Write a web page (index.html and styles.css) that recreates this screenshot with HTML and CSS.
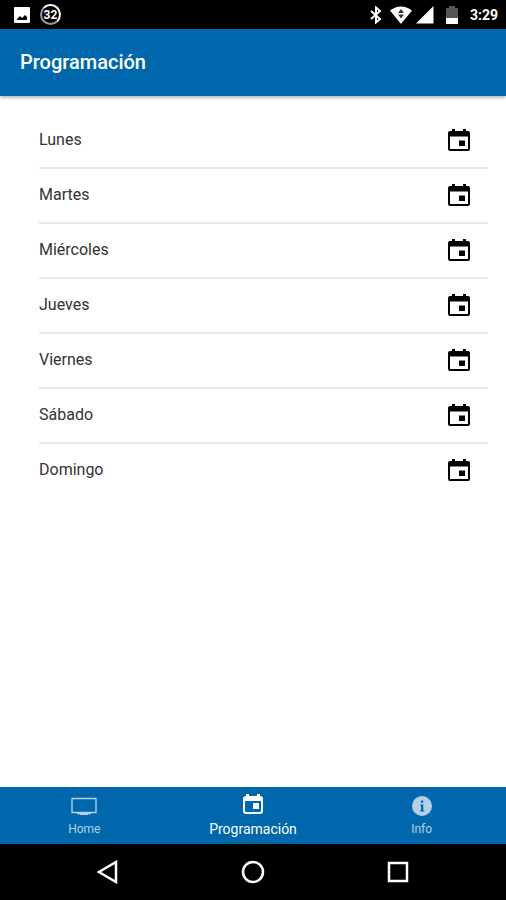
FILE: index.html
```html
<!DOCTYPE html>
<html lang="es">
<head>
  <meta charset="UTF-8">
  <meta name="viewport" content="width=device-width, initial-scale=1.0">
  <title>Programación</title>
  <link rel="stylesheet" href="styles.css">
</head>
<body>
  <svg class="sprite" aria-hidden="true">
    <symbol id="calendar" viewBox="0 0 22 22">
      <path fill-rule="evenodd" d="M4 0h3v2h8V0h3v2h2a2 2 0 0 1 2 2v16a2 2 0 0 1-2 2H2a2 2 0 0 1-2-2V4a2 2 0 0 1 2-2h2zM2 7.500V20h18V7.500z"/>
      <path d="M11 11.500h6V17h-6z"/>
    </symbol>
  </svg>

  <div class="status-bar">
    <div class="status-group">
      <svg width="16" height="16" viewBox="0 0 16 16">
        <path fill="#fff" fill-rule="evenodd" d="M1 0h14a1 1 0 0 1 1 1v14a1 1 0 0 1-1 1H1a1 1 0 0 1-1-1V1a1 1 0 0 1 1-1zM3 13h10v-3l-2-2-3 3-2-2-3 3z"/>
      </svg>
      <span class="counter">32</span>
    </div>
    <div class="status-group status-right">
      <svg width="12" height="18" viewBox="0 0 12 18">
        <path fill="none" stroke="#fff" stroke-width="2" d="M1 5l9 8-4 3.500v-15L10 5l-9 8"/>
      </svg>
      <svg class="wifi" width="22" height="18" viewBox="0 0 22 18">
        <path fill="#fff" d="M0 4.500Q11-3.500 22 4.500L11 18z"/>
        <path fill="#333" d="M11 3l3 4H8zM8 8.500h6l-3 4z"/>
      </svg>
      <svg width="18" height="18" viewBox="0 0 18 18">
        <path fill="#fff" d="M17.500 0v17.500H0z"/>
      </svg>
      <svg class="battery" width="12" height="18" viewBox="0 0 12 18">
        <path fill="#555" d="M0 2h3V0h6v2h3v10H0z"/>
        <path fill="#fff" d="M0 12h12v6H0z"/>
      </svg>
      <span class="clock">3:29</span>
    </div>
  </div>

  <header class="toolbar">
    <h1>Programación</h1>
  </header>

  <main class="content">
    <ul class="day-list">
      <li><a href="#lunes">Lunes <svg class="day-icon"><use href="#calendar"/></svg></a></li>
      <li><a href="#martes">Martes <svg class="day-icon"><use href="#calendar"/></svg></a></li>
      <li><a href="#miercoles">Miércoles <svg class="day-icon"><use href="#calendar"/></svg></a></li>
      <li><a href="#jueves">Jueves <svg class="day-icon"><use href="#calendar"/></svg></a></li>
      <li><a href="#viernes">Viernes <svg class="day-icon"><use href="#calendar"/></svg></a></li>
      <li><a href="#sabado">Sábado <svg class="day-icon"><use href="#calendar"/></svg></a></li>
      <li><a href="#domingo">Domingo <svg class="day-icon"><use href="#calendar"/></svg></a></li>
    </ul>
  </main>

  <nav class="tabs">
    <a class="tab" href="#home">
      <svg width="26" height="20" viewBox="0 0 26 20">
        <path fill="none" stroke="currentColor" stroke-width="1.3" d="M1 2.500h24v14H1z"/>
        <path fill="currentColor" d="M6 17h14v1.300h-3V19H9v-.7H6z"/>
      </svg>
      <span>Home</span>
    </a>
    <a class="tab active" href="#programacion">
      <svg width="20" height="20" viewBox="0 0 20 20">
        <path fill-rule="evenodd" d="M3 0h3v2h8V0h3v2a3 3 0 0 1 3 3v12a3 3 0 0 1-3 3H3a3 3 0 0 1-3-3V5a3 3 0 0 1 3-3zM2 7v10a1 1 0 0 0 1 1h14a1 1 0 0 0 1-1V7z"/>
        <path d="M10 9h6v6h-6z"/>
      </svg>
      <span>Programación</span>
    </a>
    <a class="tab" href="#info">
      <svg width="20" height="20" viewBox="0 0 20 20">
        <path fill="currentColor" fill-rule="evenodd" d="M10 0a10 10 0 1 1 0 20a10 10 0 0 1 0-20zM9 4.500v2.300h2.300V4.500zM8 8.500v1h1v5H8v1h4.300v-1h-1v-6z"/>
      </svg>
      <span>Info</span>
    </a>
  </nav>

  <div class="nav-bar">
    <button type="button" aria-label="Atrás">
      <svg width="24" height="24" viewBox="0 0 24 24"><path d="M20 2v20L3 12z"/></svg>
    </button>
    <button type="button" aria-label="Inicio">
      <svg width="24" height="24" viewBox="0 0 24 24"><circle cx="12" cy="12" r="10"/></svg>
    </button>
    <button type="button" aria-label="Recientes">
      <svg width="24" height="24" viewBox="0 0 24 24"><path d="M3 3h18v18H3z"/></svg>
    </button>
  </div>
</body>
</html>
```

FILE: styles.css
```css
* {
  box-sizing: border-box;
}

body {
  margin: 0;
  min-height: 100vh;
  display: flex;
  flex-direction: column;
  background: #fff;
  color: #333;
  font-family: Roboto, "Liberation Sans", sans-serif;
}

svg {
  display: block;
  fill: currentColor;
}

a {
  color: inherit;
  text-decoration: none;
}

.sprite {
  display: none;
}

/* Android status bar */
.status-bar {
  display: flex;
  justify-content: space-between;
  align-items: center;
  height: 29px;
  padding: 0 8px 0 14px;
  background: #000;
  color: #fff;
}

.status-group {
  display: flex;
  align-items: center;
  gap: 10px;
}

.status-right {
  gap: 4px;
}

.counter {
  width: 21px;
  height: 21px;
  border: 2px solid #999;
  border-top-color: #fff;
  border-right-color: #fff;
  border-radius: 50%;
  font-size: 12px;
  font-weight: 700;
  line-height: 18px;
  display: flex;
  justify-content: center;
}

.wifi {
  margin-left: 4px;
}

.battery {
  margin: 0 8px;
}

.clock {
  font-size: 14px;
  font-weight: 700;
}

.toolbar {
  display: flex;
  align-items: center;
  height: 67px;
  padding: 0 20px 2px;
  background: #0067ad;
  color: #fff;
  box-shadow: 0 1px 4px rgba(0, 0, 0, 0.4);
}

.toolbar h1 {
  margin: 0;
  font-size: 20px;
  font-weight: 500;
}

.content {
  flex: 1;
  padding: 18px 18px 18px 39px;
}

.day-list {
  margin: 0;
  padding: 0;
  list-style: none;
}

.day-list a {
  display: flex;
  justify-content: space-between;
  align-items: center;
  height: 55px;
  padding: 0 18px 2px 0;
  border-bottom: 2px solid #e8e8e8;
  font-size: 16px;
}

.day-list li:last-child a {
  border-bottom-color: transparent;
}

.day-icon {
  width: 22px;
  height: 22px;
  color: #000;
}

/* bottom tabs */
.tabs {
  display: flex;
  height: 57px;
  background: #0067ad;
  color: #fff;
}

.tab {
  flex: 1;
  display: flex;
  flex-direction: column;
  align-items: center;
  justify-content: center;
  gap: 6px;
  padding-top: 1px;
  color: #b3d1e6;
  font-size: 12px;
  line-height: 14px;
}

.tab.active {
  padding: 0 0 2px;
  gap: 8px;
  color: #fff;
  font-size: 14px;
}

.nav-bar {
  display: flex;
  justify-content: center;
  align-items: center;
  gap: 121px;
  height: 56px;
  background: #000;
}

.nav-bar button {
  padding: 0;
  border: 0;
  background: none;
}

.nav-bar svg {
  fill: none;
  stroke: #fff;
  stroke-width: 2.5;
}
```
